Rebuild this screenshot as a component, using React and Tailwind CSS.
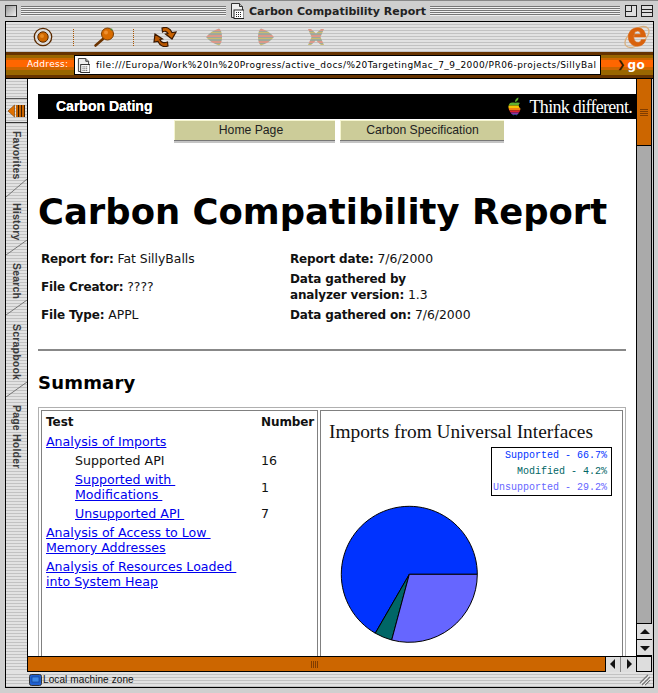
import React from "react";

const chromeStripes = "bg-[repeating-linear-gradient(180deg,#e2e2e2_0,#e2e2e2_2px,#c2c2c2_2px,#c2c2c2_3px)]";

function DocIcon({ className }) {
  return (
    <svg viewBox="0 0 14 16" className={className}>
      <path d="M1.5.5h8l3 3v11h-11z" fill="#eee" stroke="#333" />
      <path d="M9.5.5v3h3" fill="#bbb" stroke="#333" />
      <rect x="4" y="7" width="10" height="8.5" fill="#fff" stroke="#222" />
      <path d="M6 9.5h6M6 11.5h6M6 13.5h6" stroke="#222" strokeDasharray="1 1" />
    </svg>
  );
}

function Stripes({ className }) {
  return <div className={"h-[10px] bg-[repeating-linear-gradient(180deg,#777_0,#777_1px,#f0f0f0_1px,#f0f0f0_2px)] " + className} />;
}

function Dotted() {
  return <div className="h-[17px] w-[1px] border-l border-dotted border-[#aa5500]" />;
}

function TargetIcon() {
  return (
    <svg width="20" height="20" viewBox="0 0 20 20">
      <circle cx="10" cy="10" r="8.7" fill="#ddd" stroke="#5a2a00" strokeWidth="1.3" />
      <circle cx="10" cy="10" r="5.2" fill="#cc6600" stroke="#5a2a00" />
      <circle cx="9" cy="9" r="2" fill="#e88a20" />
    </svg>
  );
}

function LensIcon() {
  return (
    <svg width="22" height="22" viewBox="0 0 22 22">
      <path d="M10 13 2.5 19.5" stroke="#6b3300" strokeWidth="2.6" strokeLinecap="round" />
      <circle cx="14.5" cy="8" r="6" fill="#d96c00" stroke="#7a3c00" />
      <circle cx="13" cy="6.5" r="2" fill="#f09030" />
      <circle cx="18.5" cy="3.5" r="1" fill="#4a8a30" />
    </svg>
  );
}

function RefreshIcon() {
  return (
    <svg width="24" height="20" viewBox="0 0 24 20">
      <path d="M9 1c4-1.500 8 0 10 4.500l4-.5-4 7-6.500-5 2.500-.5C14 4.500 11.500 3.500 9.500 5z" fill="#c96200" stroke="#3a1800" strokeWidth="1.2" />
      <path d="M15 19c-4 1.500-8 0-10-4.500l-4 .5 1-8 7.500 5-2.500.5C8 15.500 10.500 16.500 14.500 15z" fill="#b85600" stroke="#3a1800" strokeWidth="1.2" />
    </svg>
  );
}

function FadedIcon({ id, d, w = 18, h = 18 }) {
  return (
    <svg width={w} height={h} viewBox="0 0 18 18">
      <defs>
        <pattern id={id} width="18" height="6" patternUnits="userSpaceOnUse">
          <rect width="18" height="6" fill="#a0a89a" />
          <rect y="1" width="18" height="2" fill="#dc9888" />
          <rect y="4" width="18" height="1" fill="#c8bc70" />
        </pattern>
      </defs>
      <path d={d} fill={`url(#${id})`} />
    </svg>
  );
}

function ELogo() {
  return (
    <svg width="28" height="28" viewBox="0 0 26 26">
      <ellipse cx="13" cy="13" rx="13" ry="7" transform="rotate(-38 13 13)" fill="none" stroke="#d8b080" strokeWidth="1.2" />
      <path d="M21 15.5c-1 4-4 6-7.5 6C8.5 21.500 5 18 5 13s3.500-8.500 8.500-8.500c4.500 0 7.500 3 7.500 8.500H10.500v-2.500h6c-.5-2-1.500-3-3-3-2.500 0-3.500 2.500-3.500 5.500s1.500 5 4 5c1.500 0 2.500-1 3-2.500z" fill="#d9620c" stroke="#d9620c" strokeWidth=".6" />
    </svg>
  );
}

function AppleLogo() {
  const bands = [
    ["#5fb030", 5.5, 3],
    ["#f5c400", 8.5, 2.500],
    ["#f08010", 11, 2.500],
    ["#e02030", 13.500, 2],
    ["#9030a0", 15.500, 2],
    ["#2080d0", 17.500, 3],
  ];
  return (
    <svg width="14" height="19" viewBox="0 0 14 19">
      <defs>
        <clipPath id="apple">
          <path d="M7 5.500C8.500 4.700 10.500 4.500 12 6c-1.500 1-2 3.500.5 5.500 0 1.500-1.500 5-3.500 6.500-1 .5-1.500-.3-2-.3s-1 .8-2 .3C2.500 16.500 0 12 .5 9 1 5.500 4.500 4.300 7 5.500z" />
        </clipPath>
      </defs>
      <path d="M7 5c0-2.500 1.500-4 3.500-4.500C10.500 3 9 4.800 7 5z" fill="#5fb030" />
      <g clipPath="url(#apple)">
        {bands.map(([c, y, h]) => (
          <rect key={c} x="0" y={y} width="14" height={h} fill={c} />
        ))}
      </g>
    </svg>
  );
}

function Diagonal({ h }) {
  return (
    <svg className="absolute bottom-0 left-0" width="21" height={h} viewBox={`0 0 21 ${h}`}>
      <path d={`M0 ${h}L21 0`} stroke="#777" fill="none" />
    </svg>
  );
}

function Tab({ label, h, pt, diag }) {
  return (
    <div className="relative flex flex-col items-center" style={{ height: h, paddingTop: pt }}>
      <span className="[writing-mode:vertical-rl] font-['Liberation_Sans',sans-serif] font-bold text-[10.5px] leading-none tracking-[0.2px] text-[#3a3a3a] whitespace-nowrap">
        {label}
      </span>
      {diag ? <Diagonal h={diag} /> : null}
    </div>
  );
}

function Sidebar() {
  return (
    <div className={"w-[22px] shrink-0 border-r border-black overflow-hidden " + chromeStripes}>
      <div className="h-[20px] border-b border-[#555]" />
      <div className="h-[24px] border-b border-[#333] flex items-center justify-center">
        <svg width="17" height="14" viewBox="0 0 17 14">
          <path d="M0 7 6.500 1v12z" fill="#e07000" stroke="#7a3c00" strokeWidth=".6" />
          <path d="M8 1h2v12H8zM11 1h2v12h-2zM14 1h2v12h-2z" fill="#c86400" />
          <path d="M10.500 1v12M13.500 1v12M16.500 1v12" stroke="#3a1c00" />
        </svg>
      </div>
      <Tab label="Favorites" h={74} pt={8} diag={18} />
      <Tab label="History" h={58} pt={6} diag={15} />
      <Tab label="Search" h={60} pt={8} diag={15} />
      <Tab label="Scrapbook" h={82} pt={9} diag={15} />
      <Tab label="Page Holder" h={100} pt={8} />
    </div>
  );
}

function Label({ children }) {
  return <b className="tracking-[-0.15px]">{children}</b>;
}

function Val({ children }) {
  return <span className="text-[12.4px]">{children}</span>;
}

function Info({ label, value }) {
  return (
    <div>
      <Label>{label}</Label> <Val>{value}</Val>
    </div>
  );
}

function A({ children, className = "" }) {
  return <a className={"text-[#0000ee] underline " + className}>{children}</a>;
}

function Chart() {
  return (
    <svg width="300" height="250" viewBox="321 411 300 250" className="block">
      <text x="329" y="438" fontFamily="'Liberation Serif', serif" fontSize="19" textLength="264" lengthAdjust="spacingAndGlyphs" fill="#111">
        Imports from Universal Interfaces
      </text>
      <rect x="491.500" y="447.500" width="120" height="48" fill="#fff" stroke="#000" />
      <text x="607" y="458" textAnchor="end" fontFamily="'Liberation Mono', monospace" fontSize="10" fill="#0033ff">Supported - 66.7%</text>
      <text x="607" y="474" textAnchor="end" fontFamily="'Liberation Mono', monospace" fontSize="10" fill="#006666">Modified - 4.2%</text>
      <text x="607" y="490" textAnchor="end" fontFamily="'Liberation Mono', monospace" fontSize="10" fill="#6666ff">Unsupported - 29.2%</text>
      <path d="M409.300 574.300H477.300A68 68 0 1 0 375.300 633.200Z" fill="#0033ff" stroke="#000" />
      <path d="M409.300 574.300L375.300 633.200A68 68 0 0 0 391.700 640Z" fill="#006666" stroke="#000" />
      <path d="M409.300 574.300L391.700 640A68 68 0 0 0 477.300 574.300Z" fill="#6666ff" stroke="#000" />
    </svg>
  );
}

function Page() {
  return (
    <div className="flex-1 min-h-0 overflow-hidden bg-white pl-[10px] pt-[15px] font-['DejaVu_Sans',sans-serif] text-[12px] leading-[15px] text-[#111]">
      <div className="h-[25px] bg-black text-white flex items-center pl-[18px] pr-[4px] justify-between font-['Liberation_Sans',sans-serif]">
        <span className="font-bold text-[14px] [text-shadow:0_0_0.5px_#fff]">Carbon Dating</span>
        <span className="flex items-center gap-[8px]">
          <AppleLogo />
          <span className="font-['Liberation_Serif',serif] text-[18px] leading-none tracking-[-0.7px]">Think different.</span>
        </span>
      </div>
      <div className="pr-[10px]">
        <div className="flex gap-[5px] pl-[136px] pt-px font-['Liberation_Sans',sans-serif] text-[12.2px] text-[#222]">
          <div className="w-[161px] h-[20px] pr-[8px] bg-[#cccc99] border-l border-t border-[#f5f5d0] shadow-[0_1px_0_#777,0_3px_0_#c4c4c4] flex items-center justify-center">Home Page</div>
          <div className="w-[164px] h-[20px] bg-[#cccc99] border-l border-t border-[#f5f5d0] shadow-[0_1px_0_#777,0_3px_0_#c4c4c4] flex items-center justify-center">Carbon Specification</div>
        </div>
        <h1 className="mt-[47px] h-[50px] font-bold text-[35.4px] leading-[50px] whitespace-nowrap text-black">Carbon Compatibility Report</h1>
        <div className="grid grid-cols-[249px_1fr] auto-rows-[28px] items-center pl-[3px] mt-[8px]">
          <Info label="Report for:" value="Fat SillyBalls" />
          <Info label="Report date:" value="7/6/2000" />
          <Info label="File Creator:" value="????" />
          <div>
            <Label>Data gathered by</Label>
            <br />
            <Label>analyzer version:</Label> <Val>1.3</Val>
          </div>
          <Info label="File Type:" value="APPL" />
          <Info label="Data gathered on:" value="7/6/2000" />
        </div>
        <div className="mt-[20px] h-[2px] bg-[#888]" />
        <h2 className="mt-[22px] h-[20px] font-bold text-[18px] leading-[20px] text-black tracking-[0.2px]">Summary</h2>
        <div className="mt-[14px] border border-[#b0b0b0] p-[2px] flex gap-[2px] h-[300px]">
          <div className="w-[277px] shrink-0 border border-[#808080] pl-[4px] pt-[4px] text-[12.6px]">
            <div className="grid grid-cols-[215px_1fr] gap-y-[4px]">
              <b className="text-[12px]">Test</b>
              <b className="text-[12px] tracking-[-0.1px]">Number</b>
              <div><A>Analysis of Imports</A></div>
              <div />
              <div className="pl-[29px]">Supported API</div>
              <div>16</div>
              <div className="pl-[29px]"><A>Supported with&nbsp;<br />Modifications&nbsp;</A></div>
              <div className="self-center">1</div>
              <div className="pl-[29px]"><A>Unsupported API&nbsp;</A></div>
              <div>7</div>
              <div><A>Analysis of Access to Low&nbsp;<br />Memory Addresses</A></div>
              <div />
              <div><A>Analysis of Resources Loaded&nbsp;<br />into System Heap</A></div>
              <div />
            </div>
          </div>
          <div className="flex-1 border border-[#808080] overflow-hidden">
            <Chart />
          </div>
        </div>
      </div>
    </div>
  );
}

function ScrollBtn({ d, className = "" }) {
  return (
    <div className={"w-[15px] h-[15px] bg-[#dddddd] flex items-center justify-center " + className}>
      <svg width="10" height="10" viewBox="0 0 10 10"><path d={d} fill="#111" /></svg>
    </div>
  );
}

export default function App() {
  return (
    <div className="w-[658px] h-[693px] bg-[#cfcfcf] overflow-hidden font-['DejaVu_Sans',sans-serif]">
      <div className="h-[21px] flex items-center pl-[5px] pr-[5px] border-t border-[#888]">
        <div className="w-[12px] h-[12px] border border-[#333] bg-gradient-to-br from-[#999] to-[#eee] shrink-0" />
        <Stripes className="ml-[4px] w-[205px]" />
        <DocIcon className="ml-[4px] w-[14px] h-[16px] shrink-0" />
        <span className="ml-[5px] w-[176px] font-bold text-[11px] leading-none whitespace-nowrap text-[#222]">Carbon Compatibility Report</span>
        <Stripes className="ml-[5px] w-[190px]" />
        <div className="ml-[5px] w-[12px] h-[12px] border border-[#222] relative bg-[#ddd] shrink-0">
          <div className="absolute left-0 top-0 w-[6px] h-[6px] border-r border-b border-[#222]" />
        </div>
        <div className="ml-[4px] w-[12px] h-[12px] border border-[#222] bg-[#ddd] shrink-0 flex flex-col justify-evenly">
          <div className="h-px bg-[#222]" />
          <div className="h-px bg-[#222]" />
        </div>
      </div>

      <div className="ml-[5px] w-[649px] h-[667px] border border-black flex flex-col">
        <div className={"h-[30px] shrink-0 flex items-center relative " + chromeStripes}>
          <div className="ml-[27px]"><TargetIcon /></div>
          <div className="ml-[20px]"><Dotted /></div>
          <div className="ml-[19px]"><LensIcon /></div>
          <div className="ml-[18px]"><Dotted /></div>
          <div className="ml-[19px]"><RefreshIcon /></div>
          <div className="ml-[28px]"><FadedIcon id="fb" d="M1 9C4 5 9 2 14 .5c2 1 3 5 3 8.500s-1 7.500-3 8.500C9 16 4 13 1 9z" /></div>
          <div className="ml-[34px]"><FadedIcon id="ff" d="M17 9C14 5 9 2 4 .5c-2 1-3 5-3 8.500s1 7.500 3 8.500c5-1.500 10-4.500 13-8.500z" /></div>
          <div className="ml-[31px]"><FadedIcon id="fs" w={20} h={18} d="M1 1h3l5 4.500L14 1h3l-3.500 8 3.500 8h-3l-5-4.500L4 17H1l3.500-8z" /></div>
          <div className="ml-auto mr-[2px]"><ELogo /></div>
        </div>

        <div className="h-[27px] shrink-0 border-b border-black flex items-center bg-[linear-gradient(180deg,#663300_0,#663300_3px,#996600_3px,#996600_6px,#cc6600_6px,#cc6600_8px,#ff6600_8px,#ff6600_15px,#cc6600_15px,#cc6600_18px,#996600_18px,#996600_23px,#663300_23px,#663300_100%)]">
          <span className="ml-[21px] w-[47px] text-[9px] tracking-[0.3px] text-white whitespace-nowrap">Address:</span>
          <div className="h-[20px] w-[527px] bg-white border border-black flex items-center overflow-hidden">
            <DocIcon className="ml-[2px] w-[13px] h-[15px] shrink-0" />
            <span className="ml-[6px] text-[9px] tracking-[0.45px] leading-none whitespace-nowrap text-black">file:///Europa/Work%20In%20Progress/active_docs/%20TargetingMac_7_9_2000/PR06-projects/SillyBal</span>
          </div>
          <span className="ml-[16px] text-[10px] text-[#3a1c00] font-bold leading-none">❯</span>
          <span className="ml-[2px] text-[12px] tracking-[0.5px] text-white font-bold leading-none">go</span>
        </div>

        <div className="flex-1 min-h-0 flex pr-px">
          <Sidebar />
          <div className="w-[608px] shrink-0 flex flex-col">
            <Page />
            <div className="h-[16px] shrink-0 border-y border-black bg-[#cc6600] flex items-center justify-end">
              <div className="mr-[287px] flex gap-px">
                <div className="w-px h-[7px] bg-[#803c00]" />
                <div className="w-px h-[7px] bg-[#803c00]" />
                <div className="w-px h-[7px] bg-[#803c00]" />
                <div className="w-px h-[7px] bg-[#803c00]" />
              </div>
              <div className="border-l border-black flex">
                <ScrollBtn d="M7 0v10L2 5z" className="border-r border-[#888]" />
                <ScrollBtn d="M3 0v10l5-5z" />
              </div>
            </div>
          </div>
          <div className="w-[16px] shrink-0 border-x border-black flex flex-col">
            <div className="h-[67px] bg-[#cc6600] flex flex-col items-center justify-center gap-px border-b border-black">
              <div className="w-[8px] h-px bg-[#803c00]" />
              <div className="w-[8px] h-px bg-[#803c00]" />
              <div className="w-[8px] h-px bg-[#803c00]" />
              <div className="w-[8px] h-px bg-[#803c00]" />
            </div>
            <div className="flex-1 bg-[#aaaaaa] border-b border-black" />
            <div className="border-b border-black"><ScrollBtn d="M5 2 0 7h10z" className="w-[14px]" /></div>
            <div className="border-b border-black"><ScrollBtn d="M0 3h10L5 8z" className="w-[14px]" /></div>
            <div className="h-[16px] bg-[#dddddd] border-y border-black" />
          </div>
        </div>

        <div className={"h-[15px] shrink-0 flex items-center pl-[23px] pr-[2px] " + chromeStripes}>
          <svg width="13" height="12" viewBox="0 0 13 12" className="shrink-0">
            <rect x=".5" y=".5" width="12" height="11" rx="2" fill="#1f5fcf" stroke="#333" />
            <rect x="3" y="3" width="7" height="5" fill="#3c88e8" stroke="#123a80" strokeWidth=".6" />
          </svg>
          <span className="ml-[1px] font-['Liberation_Sans',sans-serif] text-[10px] tracking-[0.1px] text-[#111] whitespace-nowrap">Local machine zone</span>
          <svg width="12" height="13" viewBox="0 0 12 13" className="ml-auto shrink-0">
            <path d="M1 10 9 2M3 12l8-8M6 12l5-5" stroke="#777" strokeWidth="1.2" />
            <path d="M2 11 10 3M4 13l8-8" stroke="#fff" strokeWidth=".7" />
          </svg>
        </div>
      </div>
    </div>
  );
}
